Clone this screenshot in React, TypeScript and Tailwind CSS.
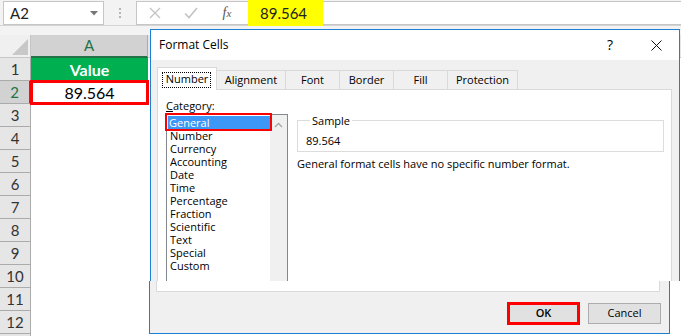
import React from "react";

const rows = Array.from({ length: 12 }, (_, i) => i + 1);
const categories = [
  "General",
  "Number",
  "Currency",
  "Accounting",
  "Date",
  "Time",
  "Percentage",
  "Fraction",
  "Scientific",
  "Text",
  "Special",
  "Custom",
];
const tabs = [
  { label: "Number", w: "w-[60px]" },
  { label: "Alignment", w: "w-[69px]" },
  { label: "Font", w: "w-[54px]" },
  { label: "Border", w: "w-[54px]" },
  { label: "Fill", w: "w-[54px]" },
  { label: "Protection", w: "w-[70px]" },
];

function FormulaBar() {
  return (
    <div className="h-[35px] bg-[#f3f3f3] relative">
      <div className="flex items-start pt-[1px] h-[26px] border-b border-[#d4d4d4]">
        <div className="ml-[3px] w-[101px] h-[24px] bg-white border border-[#c6c6c6] flex items-center justify-between pl-[6px] pr-[5px]">
          <span className="text-[15px] text-[#222] font-['Lato',sans-serif]">A2</span>
          <svg width="8" height="5" viewBox="0 0 8 5">
            <path d="M0 0 H8 L4 4.5 Z" fill="#777" />
          </svg>
        </div>
        <div className="w-[32px] h-[24px] flex flex-col items-center justify-center gap-[2px]">
          <div className="w-[2px] h-[2px] bg-[#b5b5b5]" />
          <div className="w-[2px] h-[2px] bg-[#b5b5b5]" />
          <div className="w-[2px] h-[2px] bg-[#b5b5b5]" />
        </div>
        <div className="flex-1 h-[24px] bg-white border border-[#c6c6c6] border-r-0 flex items-center">
          <div className="w-[36px] flex justify-center">
            <svg width="12" height="12" viewBox="0 0 12 12">
              <path d="M1 1 L11 11 M11 1 L1 11" stroke="#c3c3c3" strokeWidth="1.3" />
            </svg>
          </div>
          <div className="w-[36px] flex justify-center">
            <svg width="14" height="12" viewBox="0 0 14 12">
              <path d="M1 6.5 L5 10.5 L13 1" stroke="#c3c3c3" strokeWidth="1.6" fill="none" />
            </svg>
          </div>
          <div className="w-[36px] flex justify-center">
            <span className="italic text-[14px] text-[#555] font-['Liberation_Serif',serif] leading-none">
              f<span className="text-[11px]">x</span>
            </span>
          </div>
          <div className="ml-[3px] w-[75px] h-[26px] -my-[1px] bg-[#ffff00] flex items-center pl-[12px]">
            <span className="text-[15px] text-[#222] font-['Lato',sans-serif]">89.564</span>
          </div>
        </div>
      </div>
    </div>
  );
}

function Sheet() {
  return (
    <div className="font-['Lato',sans-serif]">
      {/* column header */}
      <div className="flex h-[23px]">
        <div className="w-[31px] bg-[#f0f0f0] border-r border-b border-[#c6c6c6] relative">
          <svg className="absolute right-[2px] bottom-[2px]" width="16" height="16" viewBox="0 0 16 16">
            <path d="M16 0 V16 H0 Z" fill="#c8c8c8" />
          </svg>
        </div>
        <div className="w-[117px] bg-[#d2d2d2] border-r border-[#ababab] border-b-2 border-b-[#217346] flex items-center justify-center text-[15px] text-[#217346]">
          A
        </div>
        <div className="flex-1 bg-[#e6e6e6] border-b border-[#c6c6c6]" />
      </div>
      {rows.map((r) => (
        <div key={r} className="flex h-[23px]">
          <div
            className={
              r === 2
                ? "w-[31px] bg-[#d2d2d2] border-r-2 border-r-[#217346] border-b border-b-[#ababab] flex items-center justify-center text-[15px] text-[#217346]"
                : "w-[31px] bg-[#e6e6e6] border-r border-r-[#ababab] border-b border-b-[#ababab] flex items-center justify-center text-[15px] text-[#333]"
            }
          >
            {r}
          </div>
          {r === 1 ? (
            <div className="w-[117px] bg-[#00b050] flex items-center justify-center text-[16px] font-bold text-white">
              Value
            </div>
          ) : r === 2 ? (
            <div className="w-[117px] relative flex items-center justify-center text-[16px] text-black">
              89.564
              <div className="absolute -left-[1px] -top-[1px] -right-[1px] -bottom-[1px] border-[3px] border-[#ff0000]" />
            </div>
          ) : (
            <div className="w-[117px]" />
          )}
          <div className="flex-1" />
        </div>
      ))}
      <div className="flex h-[4px]">
        <div className="w-[31px] bg-[#e6e6e6] border-r border-r-[#ababab]" />
        <div className="flex-1" />
      </div>
    </div>
  );
}

function Dialog() {
  return (
    <div className="absolute left-[149px] top-[29px] flex flex-col font-['Open_Sans',sans-serif] text-[11px] text-black">
      {/* top part */}
      <div className="ml-[1px] w-[530px] h-[252px] border-l border-r border-t border-[#1c7fd6] bg-[#f0f0f0] flex flex-col">
        <div className="h-[30px] bg-white flex items-center">
          <span className="pl-[8px] flex-1 text-[12px]">Format Cells</span>
          <span className="w-[46px] text-center text-[14px] leading-none">?</span>
          <div className="w-[46px] flex justify-center">
            <svg width="11" height="11" viewBox="0 0 11 11">
              <path d="M0.5 0.5 L10.5 10.5 M10.5 0.5 L0.5 10.5" stroke="#111" strokeWidth="1" />
            </svg>
          </div>
        </div>
        <div className="pl-[6px] pt-[7px]">
          <div className="flex items-end h-[22px] relative z-10">
            {tabs.map((t, i) =>
              i === 0 ? (
                <div
                  key={t.label}
                  className={`${t.w} h-[23px] -mb-[1px] bg-white border border-b-0 border-[#d9d9d9] relative flex items-center justify-center`}
                >
                  <div className="absolute left-[4px] right-[5px] top-[4px] bottom-[2px] border border-dotted border-black" />
                  <span>{t.label}</span>
                </div>
              ) : (
                <div
                  key={t.label}
                  className={`${t.w} h-[19px] bg-[#f0f0f0] border border-b-0 border-l-0 border-[#d9d9d9] flex items-center justify-center`}
                >
                  {t.label}
                </div>
              )
            )}
          </div>
          <div className="w-[515px] h-[192px] bg-white border border-b-0 border-[#d9d9d9] flex flex-col pl-[8px]">
            <div className="pt-[9px] h-[25px] leading-[13px]">
              <span className="underline underline-offset-1">C</span>ategory:
            </div>
            <div className="flex">
              <div className="w-[122px] h-[167px] border border-b-0 border-[#828790] flex">
                <div className="w-[103px] pt-[1px] pl-[1px] relative">
                  {categories.map((c, i) => (
                    <div
                      key={c}
                      className={
                        i === 0
                          ? "h-[13px] leading-[13px] pl-[1px] bg-[#3d97f7] text-white relative"
                          : "h-[13px] leading-[13px] pl-[2px]"
                      }
                    >
                      {c}
                      {i === 0 && (
                        <div className="absolute -left-[3px] -top-[3px] -right-[2px] -bottom-[2px] border-2 border-[#ff0000]" />
                      )}
                    </div>
                  ))}
                </div>
                <div className="flex-1 bg-[#f0f0f0] flex justify-center pt-[7px]">
                  <svg width="9" height="6" viewBox="0 0 9 6">
                    <path d="M1 5 L4.5 1.5 L8 5" stroke="#a6a6a6" strokeWidth="1.3" fill="none" />
                  </svg>
                </div>
              </div>
              <div className="ml-[9px] flex flex-col">
                <fieldset className="w-[367px] border border-[#dcdcdc] pl-[8px] pb-[4px]">
                  <legend className="ml-[4px] px-[2px] leading-[13px]">Sample</legend>
                  <div className="pt-[7px] leading-[13px]">89.564</div>
                </fieldset>
                <div className="mt-[5px] leading-[13px]">
                  General format cells have no specific number format.
                </div>
              </div>
            </div>
          </div>
        </div>
      </div>
      {/* bottom part */}
      <div className="w-[521px] h-[53px] border-l border-r border-b border-[#1c7fd6] bg-[#f0f0f0] flex flex-col">
        <div className="ml-[6px] w-[504px] h-[11px] bg-white border border-t-0 border-[#d9d9d9]" />
        <div className="flex pt-[10px] pl-[357px]">
          <div className="w-[73px] h-[23px] border-[3px] border-[#ff0000]">
            <div className="w-full h-full bg-[#e1e1e1] flex items-center justify-center font-semibold">
              OK
            </div>
          </div>
          <div className="ml-[8px] mt-[1px] w-[73px] h-[21px] bg-[#e1e1e1] border border-[#adadad] flex items-center justify-center">
            Cancel
          </div>
        </div>
      </div>
    </div>
  );
}

export default function App() {
  return (
    <div className="relative w-[681px] h-[336px] overflow-hidden bg-white">
      <FormulaBar />
      <Sheet />
      <Dialog />
    </div>
  );
}
